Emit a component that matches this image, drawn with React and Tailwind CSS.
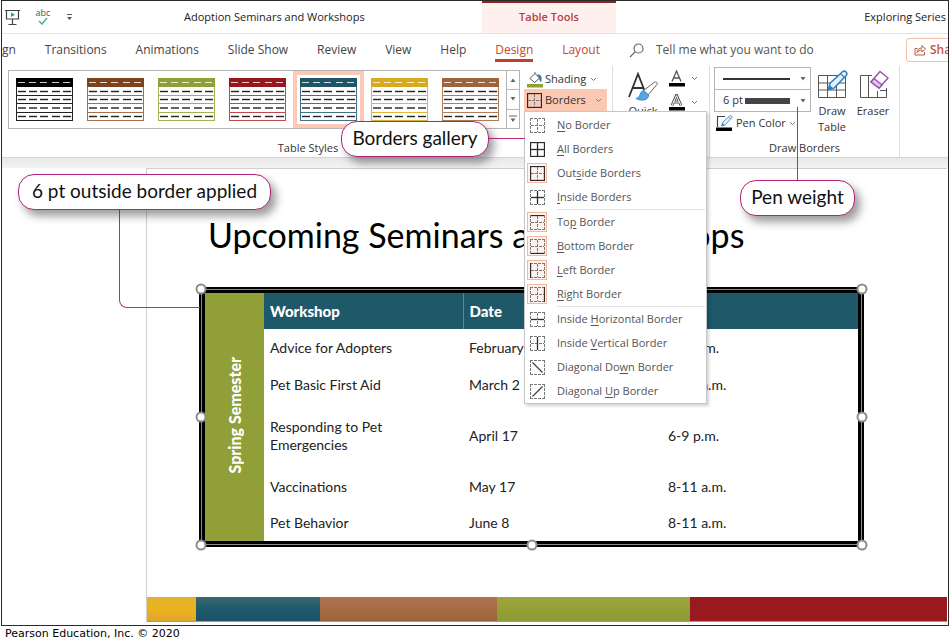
const ui = "font-['Open_Sans','Noto_Sans',sans-serif]";

const GALLERY = [
  { name: 'Black', head: '#000000', line: '#222222' },
  { name: 'Brown', head: '#7d431d', line: '#a76f47' },
  { name: 'Green', head: '#8fa037', line: '#a3b352' },
  { name: 'Red', head: '#97171d', line: '#c2484c' },
  { name: 'Teal', head: '#1f5667', line: '#3f7486', selected: true },
  { name: 'Gold', head: '#d8ab1e', line: '#dfb738' },
  { name: 'Copper', head: '#9d643d', line: '#b17c58' },
];

function TableThumb({ head, line }) {
  const dashes = [2, 13, 24, 36, 47];
  return (
    <svg width="57" height="43" viewBox="0 0 57 43" aria-hidden="true" className="block">
      <rect x="0.5" y="0.5" width="56" height="42" fill="#fff" stroke={line} />
      <rect width="57" height="9" fill={head} />
      {[17.5, 25.5, 34.5].map((y) => (
        <path key={y} d={`M0 ${y}H57`} stroke={line} />
      ))}
      {dashes.map((x) => (
        <path key={x} d={`M${x} 4.5h7`} stroke="#fff" strokeOpacity="0.8" />
      ))}
      {[13.5, 21.5, 30, 38.5].map((y) =>
        dashes.map((x) => <path key={`${x}-${y}`} d={`M${x} ${y}h8`} stroke="#222" strokeWidth="1.4" />),
      )}
    </svg>
  );
}

/* Glyph for each kind of border: solid edges are listed, the rest stay dashed. */
function BorderGlyph({ solid = '', diagonal }) {
  const edges = { t: 'M0 0.5H15', b: 'M0 14.5H15', l: 'M0.5 0V15', r: 'M14.5 0V15', h: 'M1 7.5H14', v: 'M7.5 1V14' };
  return (
    <svg width="15" height="15" viewBox="0 0 15 15" fill="none" aria-hidden="true" className="block shrink-0">
      {Object.entries(edges).map(([key, d]) => {
        if (diagonal && (key === 'h' || key === 'v')) return null;
        const isSolid = solid.includes(key);
        return (
          <path
            key={key}
            d={d}
            stroke={isSolid ? '#2b2b2b' : '#777'}
            strokeWidth={isSolid ? 1.3 : 1}
            strokeDasharray={isSolid ? undefined : '3 1'}
          />
        );
      })}
      {diagonal === 'down' && <path d="M2.5 2.5L12.5 12.5" stroke="#444" strokeWidth="1.2" />}
      {diagonal === 'up' && <path d="M2.5 12.5L12.5 2.5" stroke="#444" strokeWidth="1.2" />}
    </svg>
  );
}

const MENU = [
  [
    { pre: '', key: 'N', post: 'o Border' },
    { pre: '', key: 'A', post: 'll Borders', solid: 'tblrhv' },
    { pre: 'Out', key: 's', post: 'ide Borders', solid: 'tblr', on: true },
    { pre: '', key: 'I', post: 'nside Borders', solid: 'hv' },
  ],
  [
    { pre: 'To', key: 'p', post: ' Border', solid: 't', on: true },
    { pre: '', key: 'B', post: 'ottom Border', solid: 'b', on: true },
    { pre: '', key: 'L', post: 'eft Border', solid: 'l', on: true },
    { pre: '', key: 'R', post: 'ight Border', solid: 'r', on: true },
  ],
  [
    { pre: 'Inside ', key: 'H', post: 'orizontal Border', solid: 'h' },
    { pre: 'Inside ', key: 'V', post: 'ertical Border', solid: 'v' },
    { pre: 'Diagonal Do', key: 'w', post: 'n Border', diagonal: 'down' },
    { pre: 'Diagonal ', key: 'U', post: 'p Border', diagonal: 'up' },
  ],
];

function BordersMenu() {
  return (
    <div role="menu" className="absolute top-full left-0 z-20 w-[183px] border border-[#c6c6c6] bg-white pt-px shadow-[2px_2px_3px_rgba(0,0,0,0.18)]">
      {MENU.map((group, g) => (
        <div key={g} role="group">
          {g > 0 && <div className="mr-px ml-8 h-px bg-[#e1e1e1]" />}
          {group.map((item) => (
            <button
              key={item.pre + item.key + item.post}
              role="menuitemcheckbox"
              aria-checked={Boolean(item.on)}
              className="flex h-6 w-full items-center gap-[10px] pl-[2px] text-left text-[11px] whitespace-nowrap text-[#555]"
            >
              <span className={`flex h-5 w-5 items-center justify-center border ${item.on ? 'border-[#f6b79d] bg-[#fef3ee]' : 'border-transparent'}`}>
                <BorderGlyph solid={item.solid} diagonal={item.diagonal} />
              </span>
              <span>
                {item.pre}
                <span className="underline underline-offset-2">{item.key}</span>
                {item.post}
              </span>
            </button>
          ))}
        </div>
      ))}
    </div>
  );
}

function Chevron() {
  return (
    <svg width="7" height="5" viewBox="0 0 7 5" fill="none" aria-hidden="true" className="block shrink-0">
      <path d="M1 1L3.5 3.5L6 1" stroke="#777" />
    </svg>
  );
}

function TitleBar() {
  return (
    <header className="flex h-[33px] border-b border-[#e3e3e3] text-[11px] text-[#222]">
      <div className="flex w-[480px] items-center">
        <div className="flex w-[182px] items-center gap-4 pl-[3px]">
          <button aria-label="Start slide show">
            <svg width="15" height="17" viewBox="0 0 15 17" fill="none" stroke="#444" strokeWidth="1.2" aria-hidden="true" className="block">
              <path d="M0 1.5H15M1.5 1.5V10H13.5V1.5M7.5 10V15.5M3.5 15.5H11.5" />
              <path d="M6 3.5L10 5.8L6 8Z" fill="#2fa070" stroke="none" />
            </svg>
          </button>
          <button aria-label="Spelling" className="flex w-[14px] flex-col items-center text-[9px] leading-[8px] text-[#555]">
            abc
            <svg width="10" height="8" viewBox="0 0 10 8" fill="none" aria-hidden="true">
              <path d="M1 4L4 7L9 1" stroke="#4fae8d" strokeWidth="1.5" />
            </svg>
          </button>
          <button aria-label="Customize toolbar">
            <svg width="7" height="8" viewBox="0 0 7 8" aria-hidden="true" className="block">
              <path d="M1 1.5H6" stroke="#555" />
              <path d="M1 4H6L3.5 7Z" fill="#555" />
            </svg>
          </button>
        </div>
        <span className="whitespace-nowrap">Adoption Seminars and Workshops</span>
      </div>
      <div className="flex w-[134px] items-center justify-center border-t-2 border-[#8c2420] bg-[#fdf0ed] pb-0.5 font-semibold text-[#b8403f]">
        Table Tools
      </div>
      <div className="flex flex-1 items-center justify-end pr-[2px] whitespace-nowrap">Exploring Series</div>
    </header>
  );
}

function Tabs() {
  const tab = 'h-6 whitespace-nowrap';
  return (
    <div className="flex h-8 items-center overflow-hidden text-[12px] text-[#444]">
      <nav className="flex w-[598px] shrink-0 justify-between">
        <button className={tab}>gn</button>
        <button className={tab}>Transitions</button>
        <button className={tab}>Animations</button>
        <button className={tab}>Slide Show</button>
        <button className={tab}>Review</button>
        <button className={tab}>View</button>
        <button className={tab}>Help</button>
        <button className="relative h-6 text-[#c5482f]">
          Design
          <span className="absolute inset-x-0 bottom-0 h-[3px] bg-[#bf4128]" />
        </button>
        <button className={`${tab} text-[#c5482f]`}>Layout</button>
      </nav>
      <label className="ml-[29px] flex flex-1 items-center gap-3">
        <svg width="15" height="15" viewBox="0 0 15 15" fill="none" stroke="#666" strokeWidth="1.2" aria-hidden="true" className="shrink-0">
          <circle cx="9.5" cy="5.5" r="4.5" />
          <path d="M6.3 8.7L1 14" />
        </svg>
        <input
          aria-label="Tell me what you want to do"
          placeholder="Tell me what you want to do"
          className="w-full outline-none placeholder:text-[#555]"
        />
      </label>
      <button className="flex h-6 w-[42px] shrink-0 items-center gap-1 overflow-hidden rounded-l-sm border border-r-0 border-[#f5bfa9] pl-[7px] font-semibold text-[#c5553f]">
        <svg width="12" height="12" viewBox="0 0 12 12" fill="none" stroke="#c5553f" aria-hidden="true" className="shrink-0">
          <path d="M3.5 4.5H1V11H10.5V8M3 8.5C3.5 5.5 5 4 8 4V1.5L11.5 5L8 8V6C5.5 6 4 7 3 8.5Z" />
        </svg>
        Share
      </button>
    </div>
  );
}

function StylesGallery() {
  const scroll = 'flex w-3 flex-1 items-center justify-center';
  return (
    <div className="flex h-[59px] w-[512px] border border-[#b5b5b5]">
      <div className="flex flex-1 items-stretch">
        {GALLERY.map((style) => (
          <button
            key={style.name}
            aria-label={`${style.name} table style`}
            className={`flex w-[71px] items-center justify-center border-4 ${style.selected ? 'border-[#fbc9b5]' : 'border-transparent'}`}
          >
            <TableThumb head={style.head} line={style.line} />
          </button>
        ))}
      </div>
      <div className="flex w-[14px] flex-col divide-y divide-[#b5b5b5] border-l border-[#b5b5b5]">
        <button aria-label="Previous styles" className={scroll}>
          <svg width="6" height="4" viewBox="0 0 6 4"><path d="M0.5 4L3 0.5L5.5 4Z" fill="#666" /></svg>
        </button>
        <button aria-label="Next styles" className={scroll}>
          <svg width="6" height="4" viewBox="0 0 6 4"><path d="M0.5 0L3 3.5L5.5 0Z" fill="#666" /></svg>
        </button>
        <button aria-label="More styles" className={scroll}>
          <svg width="8" height="8" viewBox="0 0 8 8"><path d="M0 1H8" stroke="#666" /><path d="M1.5 3.5H6.5L4 7Z" fill="#666" /></svg>
        </button>
      </div>
    </div>
  );
}

function PenIcon({ x = 0, y = 0, scale = 1 }) {
  return (
    <g transform={`translate(${x} ${y}) scale(${scale})`}>
      <path d="M1 19L3 12.5L15 1.5C17 0 20 2.5 18.5 5L7 17Z" fill="#e6f2fb" stroke="#2d7fc4" strokeWidth="1.4" />
      <path d="M1 19L2.5 14L6 17.5Z" fill="#2d7fc4" />
      <path d="M13 3.5L16.5 7" stroke="#2d7fc4" strokeWidth="1.2" />
    </g>
  );
}

function Ribbon() {
  return (
    <div className="flex h-[92px] border-b border-[#d5d5d5] text-[11px] text-[#333]">
      <section className="flex w-[611px] shrink-0 flex-col border-r border-[#dedede] pl-[6px]">
        <div className="flex flex-1 items-start gap-1 pt-1">
          <StylesGallery />
          <div className="flex flex-col">
            <button className="flex h-[19px] w-[83px] items-center gap-[2px] pl-[3px]">
              <svg width="16" height="16" viewBox="0 0 16 16" fill="none" aria-hidden="true" className="block shrink-0">
                <path d="M8 1.5L12.5 6L7.5 10.5L3 6.5L8 1.5V0" stroke="#555" />
                <path d="M10.5 3C14 2.5 14.5 5 13.8 9.5C12 7.5 13.5 5 10.5 3Z" fill="#2d6fa8" stroke="#2d6fa8" />
                <rect y="12" width="16" height="3.5" fill="#8fa037" />
              </svg>
              Shading
              <span className="ml-0.5"><Chevron /></span>
            </button>
            <div className="relative">
              <button aria-haspopup="menu" aria-expanded="true" className="flex h-[22px] w-[83px] items-center gap-[3px] bg-[#fbc8b3] pl-[3px]">
                <BorderGlyph solid="tblr" />
                Borders
                <span className="ml-1.5"><Chevron /></span>
              </button>
              <BordersMenu />
            </div>
          </div>
        </div>
        <h2 className="h-[18px] pr-1 text-center leading-[18px]">Table Styles</h2>
      </section>

      <section className="flex w-[97px] shrink-0 gap-2 border-r border-[#dedede] pt-1 pl-[13px]">
        <button className="flex w-[34px] flex-col items-center gap-0.5 leading-4">
          <svg width="32" height="31" viewBox="0 0 32 31" fill="none" aria-hidden="true" className="block shrink-0">
            <path d="M2 27L11 4L18.5 23M5.5 18H16.5" stroke="#333" strokeWidth="1.8" />
            <path d="M16 21L27 12.5C29 11 31 12.5 30 14.5L21 25Z" fill="#fff" stroke="#666" />
            <path d="M17 20.5C12 21 14.5 27 9 28.5C14 31.5 22 30.5 21.5 25Z" fill="#5aa5e0" stroke="#2d7fc4" strokeWidth="0.8" />
          </svg>
          <span>Quick Styles</span>
        </button>
        <div className="flex flex-col gap-[7px]">
          {[false, true].map((outlined) => (
            <button key={String(outlined)} aria-label={outlined ? 'Text outline' : 'Text fill'} className="flex items-center gap-1.5">
              <svg width="17" height="17" viewBox="0 0 17 17" fill="none" aria-hidden="true" className="block">
                <path d="M4 11.5L8.5 1L13 11.5M5.5 8H11.5" stroke="#555" strokeWidth={outlined ? 2.8 : 1.3} />
                {outlined && <path d="M4 11.5L8.5 1.5L13 11.5M5.5 8H11.5" stroke="#fff" strokeWidth="1" />}
                <rect x="1" y="13" width="16" height="3.5" fill="#000" />
              </svg>
              <Chevron />
            </button>
          ))}
        </div>
      </section>

      <section className="flex w-[190px] shrink-0 flex-col border-r border-[#dedede] pl-1">
        <div className="flex flex-1 items-start pt-px">
          <div className="w-[97px]">
            <div className="relative h-[23px] border border-[#b5b5b5]">
              <select aria-label="Pen style" className="h-full w-full appearance-none">
                <option value="solid" aria-label="Solid" />
              </select>
              <span className="pointer-events-none absolute inset-0 flex items-center justify-between pr-1 pl-2">
                <span className="h-[2px] w-[67px] bg-[#333]" />
                <svg width="6" height="4" viewBox="0 0 6 4"><path d="M0.5 0L3 3.5L5.5 0Z" fill="#666" /></svg>
              </span>
            </div>
            <div className="relative h-[22px] border border-t-0 border-[#b5b5b5]">
              <select aria-label="Pen weight" className="h-full w-full appearance-none pl-2">
                <option>6 pt</option>
              </select>
              <span className="pointer-events-none absolute inset-0 flex items-center justify-between pr-1 pl-[30px]">
                <span className="h-[6px] w-[45px] bg-[#444]" />
                <svg width="6" height="4" viewBox="0 0 6 4"><path d="M0.5 0L3 3.5L5.5 0Z" fill="#666" /></svg>
              </span>
            </div>
            <button className="flex h-[23px] items-center gap-[3px] pl-[2px] whitespace-nowrap">
              <svg width="17" height="17" viewBox="0 0 17 17" fill="none" aria-hidden="true" className="block shrink-0">
                <path d="M9 1.5H1.5V12" stroke="#444" strokeWidth="1.2" />
                <PenIcon x={5} y={0} scale={0.58} />
                <rect y="12.5" width="16" height="3.5" fill="#000" />
              </svg>
              Pen Color
              <Chevron />
            </button>
          </div>
          <button className="flex w-[42px] flex-col items-center gap-1 pt-0.5 leading-4">
            <svg width="31" height="30" viewBox="0 0 31 30" fill="none" aria-hidden="true" className="block">
              <path d="M1.5 6.5H28.5V28.5H1.5ZM10.5 6V28.5M19.5 6V28.5M1.5 14H28.5M1.5 21H28.5" stroke="#555" />
              <PenIcon x={10} y={1} scale={1.05} />
            </svg>
            <span>Draw Table</span>
          </button>
          <button className="flex w-10 flex-col items-center gap-1 pt-0.5 leading-4">
            <svg width="31" height="30" viewBox="0 0 31 30" fill="none" aria-hidden="true" className="block">
              <path d="M14 6.5H2.5V28.5H28.5V19M10.5 6.5V28.5M19.5 22V28.5M22 21.5H28.5" stroke="#555" />
              <path d="M13 13L22 2.5L30 9L21 19Z" fill="#fff" stroke="#a04bb0" strokeWidth="1.4" />
              <path d="M13 13L16 9.5L24 16L21 19Z" fill="#e5c6ec" stroke="#a04bb0" strokeWidth="1.4" />
            </svg>
            Eraser
          </button>
        </div>
        <h2 className="h-[18px] pr-1 text-center leading-[18px]">Draw Borders</h2>
      </section>
    </div>
  );
}

const ROWS = [
  { workshop: 'Advice for Adopters', date: 'February 4', time: '6-9 p.m.', height: 'h-[37px]' },
  { workshop: 'Pet Basic First Aid', date: 'March 2', time: '8-11 a.m.', height: 'h-[37px]' },
  { workshop: 'Responding to Pet Emergencies', date: 'April 17', time: '6-9 p.m.', height: 'h-[65px]' },
  { workshop: 'Vaccinations', date: 'May 17', time: '8-11 a.m.', height: 'h-[37px]' },
  { workshop: 'Pet Behavior', date: 'June 8', time: '8-11 a.m.', height: 'h-[36px]' },
];

const HANDLES = [
  'left-0 top-0',
  'left-1/2 top-0',
  'left-full top-0',
  'left-0 top-1/2',
  'left-full top-1/2',
  'left-0 top-full',
  'left-1/2 top-full',
  'left-full top-full',
];

function SlideTable() {
  return (
    <div className="relative mr-[83px] ml-[52px] border-2 border-black bg-[#8a8a8a] p-px">
      <div className="border-[3px] border-black bg-white">
        <table className="w-full table-fixed border-collapse text-left text-[14px] leading-[18px] text-[#222]">
          <colgroup>
            <col className="w-[59px]" />
            <col className="w-[199px]" />
            <col className="w-[199px]" />
            <col />
          </colgroup>
          <tbody>
            <tr className="h-[36px] bg-[#1f5868] text-[15px] text-white">
              <th rowSpan={6} scope="rowgroup" className="bg-[#919f38] text-center align-middle text-[16px] font-black">
                <span className="inline-block rotate-180 whitespace-nowrap [writing-mode:vertical-rl]">Spring Semester</span>
              </th>
              <th scope="col" className="pl-[6px] font-black">Workshop</th>
              <th scope="col" className="border-l border-[#5d8794] pl-[6px] font-black">Date</th>
              <th scope="col" className="border-l border-[#5d8794] pl-[6px] font-black">Time</th>
            </tr>
            {ROWS.map((row) => (
              <tr key={row.workshop} className={row.height}>
                <td className="pr-14 pl-[6px]">{row.workshop}</td>
                <td className="pl-[6px]">{row.date}</td>
                <td className="pl-[6px]">{row.time}</td>
              </tr>
            ))}
          </tbody>
        </table>
      </div>
      {HANDLES.map((place) => (
        <span key={place} className={`absolute h-[11px] w-[11px] -translate-x-1/2 -translate-y-1/2 rounded-full border-2 border-[#8c8c8c] bg-white ${place}`} />
      ))}
    </div>
  );
}

function Slide() {
  return (
    <div className="bg-linear-to-b from-[#e8e8e8] to-[#f3f3f3] to-[10px] pt-[10px]">
      <div className="bg-white pr-px pl-[144px]">
        <article className="border-t border-l border-[#cfcfcf] font-['Lato',sans-serif]">
          <h1 className="h-[118px] pt-[44px] pl-[61px] text-[34px] leading-[44px] whitespace-nowrap text-black">Upcoming Seminars and Workshops</h1>
          <SlideTable />
          <div className="mt-[50px] mb-[3px] flex h-[25px] border-b border-[#999]">
            <div className="flex-[49] bg-linear-to-b from-[#e2b32f] via-[#ebb41c] to-[#dfa62c]" />
            <div className="flex-[124] bg-linear-to-b from-[#3b6871] via-[#1c5a6b] to-[#1d5266]" />
            <div className="flex-[177] bg-linear-to-b from-[#b0734f] to-[#9c6339]" />
            <div className="flex-[194] bg-linear-to-b from-[#9da63a] to-[#8c9a34]" />
            <div className="flex-[257] bg-[#98191e]" />
          </div>
        </article>
      </div>
    </div>
  );
}

const callout =
  "absolute z-30 flex h-9 items-center justify-center rounded-2xl border border-[#b3237a] bg-white pb-0.5 font-['Lato',sans-serif] text-[19px] whitespace-nowrap text-[#111] shadow-[5px_6px_8px_rgba(60,60,60,0.5)]";

function Callouts() {
  return (
    <>
      <div className="absolute top-[137px] left-[486px] z-30 w-[37px] border-t border-[#c2267f]" />
      <div className={`${callout} top-[120px] left-[339px] w-[148px]`}>Borders gallery</div>
      <div className="absolute top-[208px] left-[117px] z-10 h-[99px] w-[81px] rounded-bl-lg border-b border-l border-[#c2267f]" />
      <div className={`${callout} top-[173px] left-[16px] w-[253px]`}>6 pt outside border applied</div>
      <div className="absolute top-[106px] left-[795px] z-30 h-[74px] border-l border-[#c2267f]" />
      <div className={`${callout} top-[179px] left-[738px] w-[115px]`}>Pen weight</div>
    </>
  );
}

export default function App() {
  return (
    <div className="min-h-screen overflow-hidden bg-white">
      <main className={`relative mx-px border border-[#2a2a2a] ${ui}`}>
        <TitleBar />
        <Tabs />
        <Ribbon />
        <Slide />
        <Callouts />
      </main>
      <footer className="pl-[5px] font-['DejaVu_Sans',sans-serif] text-[11px] leading-4 text-black">Pearson Education, Inc. © 2020</footer>
    </div>
  );
}
